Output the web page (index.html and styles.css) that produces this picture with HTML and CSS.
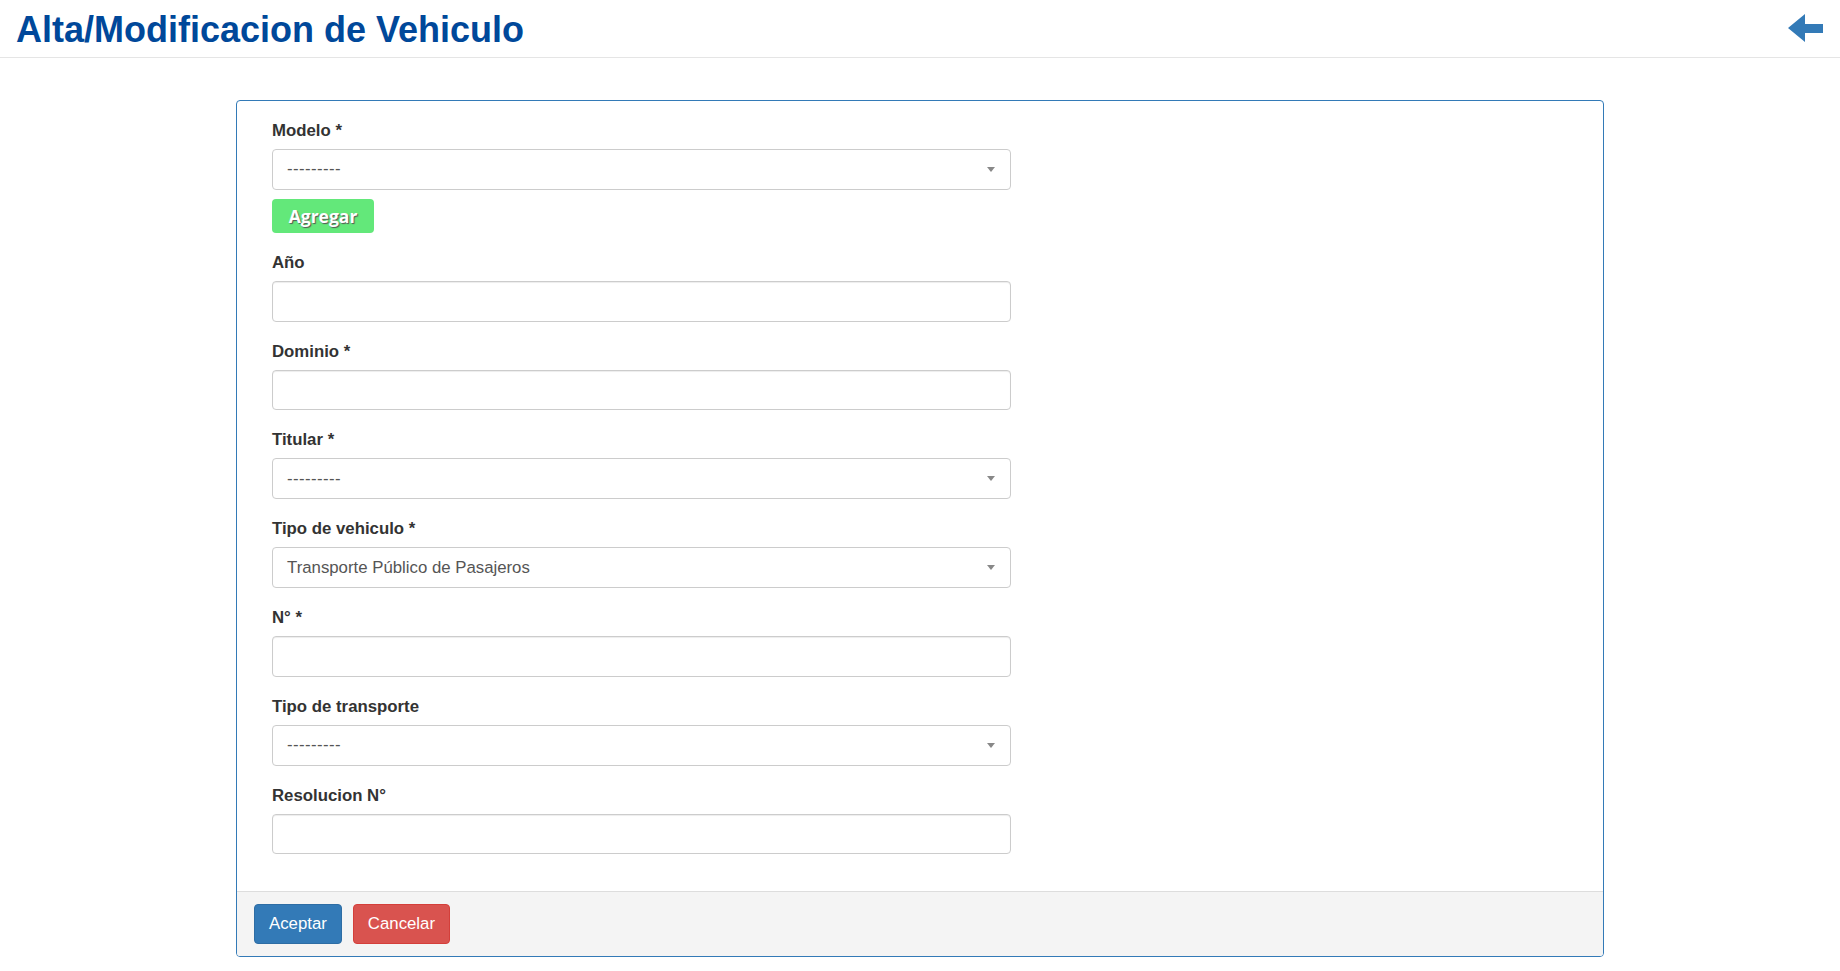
FILE: index.html
```html
<!DOCTYPE html>
<html lang="es">
<head>
<meta charset="utf-8">
<title>Alta/Modificacion de Vehiculo</title>
<link rel="stylesheet" href="styles.css">
</head>
<body>
<header class="topbar">
  <h1 class="title">Alta/Modificacion de Vehiculo</h1>
  <a class="back" href="#" aria-label="Volver">
    <svg width="35" height="28" viewBox="0 0 35 28"><polygon points="0,14 17,0 17,10 35,10 35,19 17,19 17,28" fill="#337ab7"/></svg>
  </a>
</header>
<main class="page">
  <form class="panel">
    <div class="panel-body">
      <div class="group">
        <label class="label">Modelo *</label>
        <div class="control select"><span class="placeholder">---------</span><i class="caret"></i></div>
        <button type="button" class="btn-add">Agregar</button>
      </div>
      <div class="group">
        <label class="label">Año</label>
        <input class="control" type="text">
      </div>
      <div class="group">
        <label class="label">Dominio *</label>
        <input class="control" type="text">
      </div>
      <div class="group">
        <label class="label">Titular *</label>
        <div class="control select"><span class="placeholder">---------</span><i class="caret"></i></div>
      </div>
      <div class="group">
        <label class="label">Tipo de vehiculo *</label>
        <div class="control select"><span>Transporte Público de Pasajeros</span><i class="caret"></i></div>
      </div>
      <div class="group">
        <label class="label">N° *</label>
        <input class="control" type="text">
      </div>
      <div class="group">
        <label class="label">Tipo de transporte</label>
        <div class="control select"><span class="placeholder">---------</span><i class="caret"></i></div>
      </div>
      <div class="group">
        <label class="label">Resolucion N°</label>
        <input class="control" type="text">
      </div>
    </div>
    <div class="panel-footer">
      <button type="button" class="btn btn-primary">Aceptar</button>
      <button type="button" class="btn btn-danger">Cancelar</button>
    </div>
  </form>
</main>
</body>
</html>
```
FILE: styles.css
```css
body {
  margin: 0;
  font-family: "Liberation Sans", Arial, sans-serif;
  color: #333;
  background: #fff;
}
.topbar {
  display: flex;
  justify-content: space-between;
  align-items: flex-start;
  padding: 10px 17px 7px 16px;
  border-bottom: 1px solid #e5e5e5;
}
.title {
  margin: 0;
  font-size: 36px;
  line-height: 40px;
  font-weight: 700;
  color: #00489a;
}
.back {
  display: block;
  margin-top: 4px;
  width: 35px;
  height: 28px;
}
.back svg { display: block; }
.page {
  padding-top: 42px;
}
.panel {
  width: 1368px;
  box-sizing: border-box;
  margin: 0 auto;
  border: 1px solid #337ab7;
  border-radius: 4px;
  overflow: hidden;
}
.panel-body {
  padding: 18px 35px 19px;
}
.group {
  width: 739px;
  margin-bottom: 18px;
}
.label {
  display: block;
  font-weight: 700;
  font-size: 16.8px;
  line-height: 24px;
  margin-bottom: 6px;
  color: #333;
}
.control {
  display: block;
  width: 100%;
  box-sizing: border-box;
  height: 40.8px;
  margin: 0;
  border: 1px solid #ccc;
  border-radius: 4px;
  box-shadow: inset 0 1px 1px rgba(0, 0, 0, 0.075);
  background: #fff;
  font-family: "Liberation Sans", Arial, sans-serif;
  font-size: 16.8px;
  color: #555;
  padding: 0 14px;
}
.select {
  display: flex;
  align-items: center;
  justify-content: space-between;
  padding: 0 15px 0 14px;
  box-shadow: none;
}
.placeholder {
  letter-spacing: 0.4px;
}
.caret {
  width: 0;
  height: 0;
  border-left: 4px solid transparent;
  border-right: 4px solid transparent;
  border-top: 5px solid #888;
}
.btn-add {
  display: block;
  margin-top: 9px;
  width: 102px;
  height: 34px;
  padding: 0;
  background: #63e87a;
  border: 0;
  border-radius: 4px;
  color: #fff;
  font-family: "Open Sans", "DejaVu Sans", sans-serif;
  font-weight: 700;
  font-size: 17.5px;
  text-shadow: 1px 1px 1px #555;
}
.panel-footer {
  display: flex;
  gap: 11px;
  padding: 12px 17px;
  background: #f4f4f4;
  border-top: 1px solid #ddd;
}
.btn {
  height: 40px;
  padding: 0 14px;
  font-family: "Liberation Sans", Arial, sans-serif;
  font-size: 16.8px;
  color: #fff;
  border-radius: 4px;
  border: 1px solid;
}
.btn-primary {
  background: #337ab7;
  border-color: #2e6da4;
}
.btn-danger {
  background: #d9534f;
  border-color: #d43f3a;
}
```
